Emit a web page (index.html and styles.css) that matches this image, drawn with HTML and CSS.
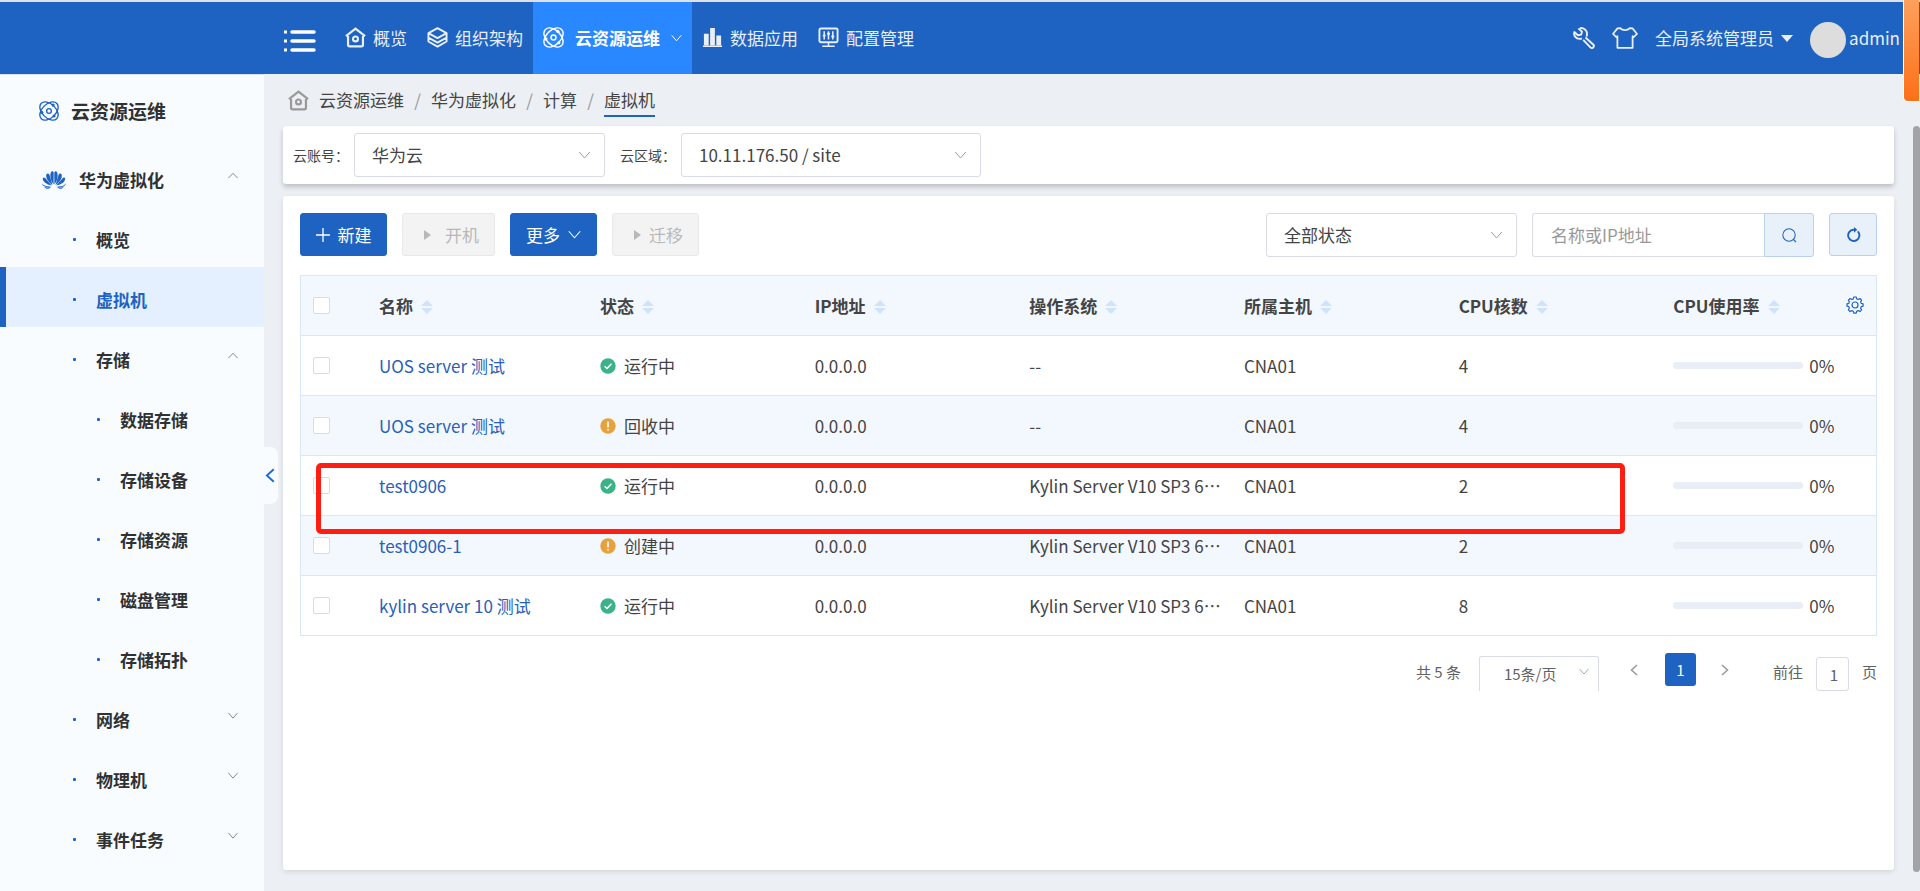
FILE: index.html
```html
<!DOCTYPE html>
<html lang="zh-CN">
<head>
    <meta charset="UTF-8">
    <meta name="viewport" content="width=device-width, initial-scale=1.0">
    <title>虚拟机 - 云资源运维</title>
    <link rel="stylesheet" href="styles.css">
</head>
<body>
    <!-- Icons -->
    <svg class="sprite" aria-hidden="true">
        <symbol id="i-home" viewBox="0 0 22 22">
            <path d="M1 9.5 11 1.8l10 7.7M3.2 9.5v9.2c0 1 .6 1.6 1.6 1.6h12.4c1 0 1.6-.6 1.6-1.6V9.5" fill="none" stroke="currentColor" stroke-width="2.3"/>
            <circle cx="11" cy="12.5" r="2.6" fill="none" stroke="currentColor" stroke-width="2.2"/>
        </symbol>
        <symbol id="i-layers" viewBox="0 0 22 22">
            <path d="M11 1.2 20.5 6.4 11 11.6 1.5 6.4zM1.5 6.4v4.8L11 16.4l9.5-5.2V6.4M1.5 11v4.2L11 20.6l9.5-5.4V11" fill="none" stroke="currentColor" stroke-width="2" stroke-linejoin="round"/>
        </symbol>
        <symbol id="i-atom" viewBox="0 0 22 22">
            <g fill="none" stroke="currentColor" stroke-width="1.5">
                <ellipse cx="11" cy="11" rx="12" ry="7.600" transform="rotate(45 11 11)"/>
                <ellipse cx="11" cy="11" rx="12" ry="7.600" transform="rotate(-45 11 11)"/>
                <circle cx="11" cy="11" r="2.600"/>
            </g>
            <circle cx="15.500" cy="4.500" r="1.700" fill="currentColor"/>
            <circle cx="3" cy="12.500" r="1.700" fill="currentColor"/>
            <circle cx="16.500" cy="16.500" r="1.700" fill="currentColor"/>
        </symbol>
        <symbol id="i-bars" viewBox="0 0 22 22">
            <path d="M2 7h5v12H2zM8.500 1h5v18h-5zM15 9h5v10h-5zM1 19.500h20V21H1z" fill="currentColor"/>
        </symbol>
        <symbol id="i-config" viewBox="0 0 22 22">
            <rect x="1.500" y="1.500" width="19" height="14.500" rx="1.500" fill="none" stroke="currentColor" stroke-width="2"/>
            <path d="M6.500 4.500V13M11 4.500V13M15.500 4.500V13M11 16v4M4.500 20.200h13" fill="none" stroke="currentColor" stroke-width="1.600"/>
            <path d="M5 9h3M9.500 7h3M14 10h3" fill="none" stroke="currentColor" stroke-width="2"/>
        </symbol>
        <symbol id="i-menu" viewBox="0 0 32 22">
            <path d="M8 2h22M8 11h22M8 20h22" stroke="currentColor" stroke-width="3.500" stroke-linecap="round"/>
            <path d="M0 .500h3v3H0zM0 9.500h3v3H0zM0 18.500h3v3H0z" fill="currentColor"/>
        </symbol>
        <symbol id="i-wrench" viewBox="0 0 22 22">
            <path d="M5.400 1.400 9 4.800 8.200 7.600 5 8.200 1.300 5C.4 8.500 2.800 12.400 7.400 11.800L9 11.600M7 1.100c3.600-.6 7.400 2 7 6.200l-.4 2.300M12.500 10.500l7.700 7a2 2 0 0 1-2.800 2.900l-7.200-7.600" fill="none" stroke="currentColor" stroke-width="1.900" stroke-linejoin="round"/>
        </symbol>
        <symbol id="i-shirt" viewBox="0 0 26 22">
            <path d="M8.200 1.200c2.200 2.600 7.400 2.600 9.600 0l2.700.2 4.400 5.400-3 3.200-1.300-.8v11.600H5.400V9.200l-1.300.8-3-3.200 4.400-5.400z" fill="none" stroke="currentColor" stroke-width="1.800" stroke-linejoin="round"/>
        </symbol>
        <symbol id="i-down" viewBox="0 0 12 8">
            <path d="M.700 1 6 7l5.300-6" fill="none" stroke="currentColor"/>
        </symbol>
        <symbol id="i-up" viewBox="0 0 12 8">
            <path d="M.700 7 6 1.500 11.300 7" fill="none" stroke="currentColor"/>
        </symbol>
        <symbol id="i-left" viewBox="0 0 8 12">
            <path d="M7 1 1.500 6 7 11" fill="none" stroke="currentColor" stroke-width="1.500"/>
        </symbol>
        <symbol id="i-right" viewBox="0 0 8 12">
            <path d="M1 1l5.500 5L1 11" fill="none" stroke="currentColor" stroke-width="1.500"/>
        </symbol>
        <symbol id="i-flower" viewBox="0 0 24 18">
            <g fill="currentColor">
                <path d="M11.600 13.500C8 9 7.500 3 9.500.500c1-.600 2 0 2.200 1.200z"/>
                <path d="M12.400 13.500C16 9 16.500 3 14.500.500c-1-.600-2 0-2.200 1.200z"/>
                <path d="M10.500 14C5.500 10.500 3.500 6 4.400 3.500c1-1.500 2.300-1.300 3 .2z"/>
                <path d="M13.500 14c5-3.500 7-8 6.100-10.500-1-1.500-2.300-1.300-3 .2z"/>
                <path d="M9.800 14.600C4 13.400.700 10.500.800 7.500c.6-1.300 1.500-1.400 2.400-.4z"/>
                <path d="M14.200 14.600c5.800-1.200 9.100-4.100 9-7.100-.6-1.300-1.500-1.400-2.400-.4z"/>
                <path d="M9.400 15.400C5 15.800 1.500 14.800.1 12.200c0 3.200 4.500 4.800 9.300 3.200zM9 16c-3 .5-5 .7-6.800 0 1.800 2.400 4.800 2.400 6.800 0z"/>
                <path d="M14.600 15.400c4.400.4 7.900-.6 9.300-3.200 0 3.200-4.500 4.800-9.300 3.200zM15 16c3 .5 5 .7 6.800 0-1.800 2.400-4.800 2.400-6.800 0z"/>
            </g>
        </symbol>
        <symbol id="i-search" viewBox="0 0 16 16">
            <circle cx="7.500" cy="7.500" r="6.600" fill="none" stroke="currentColor" stroke-width="1.100"/>
            <path d="m12 12 3 3" stroke="currentColor" stroke-width="1.200"/>
        </symbol>
        <symbol id="i-refresh" viewBox="0 0 16 16">
            <path d="M12.500 4.600a6 6 0 1 1-4.500-1.700h2" fill="none" stroke="currentColor" stroke-width="2"/>
            <path d="M8.500 0 12 2.900 8.500 6z" fill="currentColor"/>
        </symbol>
        <symbol id="i-plus" viewBox="0 0 14 14">
            <path d="M7 0v14M0 7h14" stroke="currentColor" stroke-width="1.300"/>
        </symbol>
        <symbol id="i-play" viewBox="0 0 7 10">
            <path d="M0 0l7 5-7 5z" fill="currentColor"/>
        </symbol>
        <symbol id="i-sort" viewBox="0 0 12 16">
            <path d="M6 1l6 6H0zM6 15l6-6H0z" fill="currentColor"/>
        </symbol>
        <symbol id="i-ok" viewBox="0 0 16 16">
            <circle cx="8" cy="8" r="7.700" fill="#3bb287"/>
            <path d="M4.600 8.200 7 10.500l4.500-4.700" fill="none" stroke="#fff" stroke-width="1.500"/>
        </symbol>
        <symbol id="i-warn" viewBox="0 0 16 16">
            <circle cx="8" cy="8" r="7.700" fill="#e6a23c"/>
            <path d="M8 3.500v6M8 11v1.600" stroke="#fff" stroke-width="1.600"/>
        </symbol>
        <symbol id="i-gear" viewBox="0 0 18 18">
            <path d="M7.800 1h2.400l.5 1.900 1.500.6L13.900 2.500l1.700 1.700-1 1.700.6 1.500 1.900.4v2.400l-1.900.5-.6 1.500 1 1.700-1.700 1.700-1.700-1-1.500.6-.5 1.900H7.800l-.5-1.900-1.500-.6-1.700 1-1.700-1.700 1-1.700-.6-1.500L1 10.200V7.800l1.800-.4.600-1.500-1-1.700 1.700-1.700 1.700 1 1.500-.6z" fill="none" stroke="currentColor" stroke-width="1.200" stroke-linejoin="round"/>
            <circle cx="9" cy="9" r="3" fill="none" stroke="currentColor" stroke-width="1.200"/>
        </symbol>
    </svg>

    <header class="header">
        <button class="menu-btn" aria-label="菜单"><svg><use href="#i-menu"/></svg></button>
        <nav class="navbar">
            <a href="#"><svg><use href="#i-home"/></svg>概览</a>
            <a href="#"><svg><use href="#i-layers"/></svg>组织架构</a>
            <a href="#" class="active"><svg><use href="#i-atom"/></svg>云资源运维<svg class="caret"><use href="#i-down"/></svg></a>
            <a href="#"><svg><use href="#i-bars"/></svg>数据应用</a>
            <a href="#"><svg><use href="#i-config"/></svg>配置管理</a>
        </nav>
        <div class="user">
            <button aria-label="工具"><svg class="tool"><use href="#i-wrench"/></svg></button>
            <button aria-label="主题"><svg class="theme"><use href="#i-shirt"/></svg></button>
            <button class="role">全局系统管理员<span class="triangle"></span></button>
            <a href="#" class="account"><span class="avatar"></span>admin</a>
        </div>
    </header>

    <div class="layout">
        <aside class="sidebar">
            <h2><svg><use href="#i-atom"/></svg>云资源运维</h2>
            <ul>
                <li><a href="#" class="group"><svg class="logo"><use href="#i-flower"/></svg>华为虚拟化<svg class="arrow"><use href="#i-up"/></svg></a></li>
                <li><a href="#" class="item">概览</a></li>
                <li><a href="#" class="item active">虚拟机</a></li>
                <li><a href="#" class="item">存储<svg class="arrow"><use href="#i-up"/></svg></a></li>
                <li><a href="#" class="item sub">数据存储</a></li>
                <li><a href="#" class="item sub">存储设备</a></li>
                <li><a href="#" class="item sub">存储资源</a></li>
                <li><a href="#" class="item sub">磁盘管理</a></li>
                <li><a href="#" class="item sub">存储拓扑</a></li>
                <li><a href="#" class="item">网络<svg class="arrow"><use href="#i-down"/></svg></a></li>
                <li><a href="#" class="item">物理机<svg class="arrow"><use href="#i-down"/></svg></a></li>
                <li><a href="#" class="item">事件任务<svg class="arrow"><use href="#i-down"/></svg></a></li>
            </ul>
            <button class="collapse" aria-label="收起"><svg><use href="#i-left"/></svg></button>
        </aside>

        <main class="main">
            <nav class="breadcrumb">
                <svg><use href="#i-home"/></svg>
                <a href="#">云资源运维</a><span>/</span>
                <a href="#">华为虚拟化</a><span>/</span>
                <a href="#">计算</a><span>/</span>
                <a href="#" class="current">虚拟机</a>
            </nav>

            <section class="filter">
                <label for="account">云账号：</label>
                <div class="select account-select">
                    <select id="account"><option>华为云</option></select>
                    <svg><use href="#i-down"/></svg>
                </div>
                <label for="region">云区域：</label>
                <div class="select region-select">
                    <select id="region"><option>10.11.176.50 / site</option></select>
                    <svg><use href="#i-down"/></svg>
                </div>
            </section>

            <section class="content">
                <div class="toolbar">
                    <button class="btn primary"><svg class="plus"><use href="#i-plus"/></svg>新建</button>
                    <button class="btn start" disabled><svg class="play"><use href="#i-play"/></svg>开机</button>
                    <button class="btn primary">更多<svg class="more"><use href="#i-down"/></svg></button>
                    <button class="btn" disabled><svg class="play"><use href="#i-play"/></svg>迁移</button>
                    <div class="select state-select">
                        <select aria-label="状态"><option>全部状态</option></select>
                        <svg><use href="#i-down"/></svg>
                    </div>
                    <div class="search">
                        <input type="text" placeholder="名称或IP地址" aria-label="名称或IP地址">
                        <button aria-label="搜索"><svg><use href="#i-search"/></svg></button>
                    </div>
                    <button class="refresh" aria-label="刷新"><svg><use href="#i-refresh"/></svg></button>
                </div>

                <div class="table-wrap">
                    <table>
                        <thead>
                            <tr>
                                <th class="col-check"><input type="checkbox" aria-label="全选"></th>
                                <th class="col-name">名称<svg class="sort"><use href="#i-sort"/></svg></th>
                                <th>状态<svg class="sort"><use href="#i-sort"/></svg></th>
                                <th>IP地址<svg class="sort"><use href="#i-sort"/></svg></th>
                                <th>操作系统<svg class="sort"><use href="#i-sort"/></svg></th>
                                <th>所属主机<svg class="sort"><use href="#i-sort"/></svg></th>
                                <th>CPU核数<svg class="sort"><use href="#i-sort"/></svg></th>
                                <th>CPU使用率<svg class="sort"><use href="#i-sort"/></svg></th>
                            </tr>
                        </thead>
                        <tbody>
                            <tr>
                                <td><input type="checkbox" aria-label="选择"></td>
                                <td><a href="#">UOS server 测试</a></td>
                                <td><svg class="state"><use href="#i-ok"/></svg>运行中</td>
                                <td>0.0.0.0</td>
                                <td>--</td>
                                <td>CNA01</td>
                                <td>4</td>
                                <td><div class="usage"><span class="bar"></span>0%</div></td>
                            </tr>
                            <tr>
                                <td><input type="checkbox" aria-label="选择"></td>
                                <td><a href="#">UOS server 测试</a></td>
                                <td><svg class="state"><use href="#i-warn"/></svg>回收中</td>
                                <td>0.0.0.0</td>
                                <td>--</td>
                                <td>CNA01</td>
                                <td>4</td>
                                <td><div class="usage"><span class="bar"></span>0%</div></td>
                            </tr>
                            <tr>
                                <td><input type="checkbox" aria-label="选择"></td>
                                <td><a href="#">test0906</a></td>
                                <td><svg class="state"><use href="#i-ok"/></svg>运行中</td>
                                <td>0.0.0.0</td>
                                <td>Kylin Server V10 SP3 6…</td>
                                <td>CNA01</td>
                                <td>2</td>
                                <td><div class="usage"><span class="bar"></span>0%</div></td>
                            </tr>
                            <tr>
                                <td><input type="checkbox" aria-label="选择"></td>
                                <td><a href="#">test0906-1</a></td>
                                <td><svg class="state"><use href="#i-warn"/></svg>创建中</td>
                                <td>0.0.0.0</td>
                                <td>Kylin Server V10 SP3 6…</td>
                                <td>CNA01</td>
                                <td>2</td>
                                <td><div class="usage"><span class="bar"></span>0%</div></td>
                            </tr>
                            <tr>
                                <td><input type="checkbox" aria-label="选择"></td>
                                <td><a href="#">kylin server 10 测试</a></td>
                                <td><svg class="state"><use href="#i-ok"/></svg>运行中</td>
                                <td>0.0.0.0</td>
                                <td>Kylin Server V10 SP3 6…</td>
                                <td>CNA01</td>
                                <td>8</td>
                                <td><div class="usage"><span class="bar"></span>0%</div></td>
                            </tr>
                        </tbody>
                    </table>
                    <button class="settings" aria-label="列设置"><svg><use href="#i-gear"/></svg></button>
                    <div class="highlight"></div>
                </div>

                <div class="pagination">
                    <span>共 5 条</span>
                    <div class="page-size">
                        <select aria-label="每页条数"><option>15条/页</option></select>
                        <svg><use href="#i-down"/></svg>
                    </div>
                    <button class="page-btn" aria-label="上一页"><svg><use href="#i-left"/></svg></button>
                    <button class="page-btn current">1</button>
                    <button class="page-btn" aria-label="下一页"><svg><use href="#i-right"/></svg></button>
                    <label for="jump">前往</label>
                    <input id="jump" type="text" value="1">
                    <span>页</span>
                </div>
            </section>
        </main>
    </div>

    <div class="side-tab"></div>
    <div class="scrollbar"></div>
</body>
</html>
```
FILE: styles.css
```css
* {
    margin: 0;
    padding: 0;
    box-sizing: border-box;
}

body {
    min-height: 100vh;
    display: flex;
    flex-direction: column;
    font-family: "Noto Sans CJK SC", sans-serif;
    font-size: 17px;
    line-height: 24px;
    color: #444;
    background: #eceff4;
}

a {
    color: inherit;
    text-decoration: none;
}

button, input, select {
    font: inherit;
    color: inherit;
    border: none;
    background: none;
}

svg {
    display: block;
    flex-shrink: 0;
}

.sprite {
    position: absolute;
    width: 0;
    height: 0;
}

/* Header */
.header {
    display: flex;
    height: 74px;
    padding-left: 284px;
    padding-right: 20px;
    border-top: 2px solid #dfe1e4;
    background: #1e63c1;
    color: #e9eef7;
}

.menu-btn {
    margin-right: 19px;
    color: #fff;
}

.menu-btn svg {
    width: 32px;
    height: 22px;
    margin-top: 6px;
}

.navbar {
    display: flex;
}

.navbar a {
    display: flex;
    align-items: center;
    gap: 7px;
    padding: 0 10px;
}

.navbar a svg {
    width: 21px;
    height: 21px;
    margin-bottom: 2px;
}

.navbar .active {
    gap: 11px;
    background: #2988ff;
    color: #fff;
    font-weight: bold;
}

.navbar .active .caret {
    width: 11px;
    height: 8px;
    margin-bottom: 0;
}

.user {
    display: flex;
    align-items: center;
    margin-left: auto;
    gap: 17px;
    white-space: nowrap;
}

.user .tool {
    width: 22px;
    height: 22px;
}

.user .theme {
    width: 26px;
    height: 22px;
}

.role {
    display: flex;
    align-items: center;
    gap: 7px;
}

.triangle {
    border: 6px solid transparent;
    border-top: 7px solid #e9eef7;
    border-bottom: none;
}

.account {
    display: flex;
    align-items: center;
    gap: 3px;
}

.avatar {
    width: 36px;
    height: 36px;
    margin-top: 4px;
    border-radius: 50%;
    background: #ddd;
}

/* Sidebar */
.layout {
    flex: 1;
    display: flex;
}

.sidebar {
    position: relative;
    flex-shrink: 0;
    width: 264px;
    border-top: 1px solid #dcdfe3;
    background: #f9fcff;
    color: #303133;
    font-weight: bold;
}

.sidebar ul {
    list-style: none;
}

.sidebar h2 {
    display: flex;
    align-items: center;
    gap: 12px;
    height: 72px;
    padding-left: 39px;
    font-size: 19px;
}

.sidebar h2 svg {
    width: 20px;
    height: 20px;
    color: #1e63c1;
}

.sidebar li a {
    display: flex;
    align-items: center;
    height: 60px;
    padding-top: 5px;
    padding-right: 25px;
}

.sidebar .group {
    gap: 13px;
    padding-left: 42px;
}

.sidebar .logo {
    width: 24px;
    height: 18px;
    color: #1e63c1;
}

.sidebar .arrow {
    width: 12px;
    height: 7px;
    margin-left: auto;
    margin-bottom: 8px;
    color: #777;
}

.sidebar .item {
    padding-left: 73px;
}

.sidebar .item.sub {
    padding-left: 97px;
}

.sidebar .item::before {
    content: "";
    width: 3px;
    height: 3px;
    margin-right: 20px;
    border-radius: 1px;
    background: #1e63c1;
}

.sidebar .item.active {
    padding-left: 67px;
    border-left: 6px solid #1e63c1;
    background: #e4f0ff;
    color: #1e63c1;
}

.collapse {
    position: absolute;
    top: 372px;
    left: 100%;
    width: 14px;
    height: 57px;
    padding-left: 1px;
    border-radius: 0 8px 8px 0;
    background: #f9fcff;
    color: #1668e3;
}

.collapse svg {
    width: 10px;
    height: 15px;
}

/* Main */
.main {
    flex: 1;
    min-width: 0;
    display: flex;
    flex-direction: column;
    padding: 0 26px 21px 19px;
}

.breadcrumb {
    display: flex;
    align-items: center;
    height: 52px;
    padding-left: 5px;
}

.breadcrumb svg {
    width: 21px;
    height: 21px;
    margin-right: 10px;
    color: #999;
}

.breadcrumb span {
    width: 27px;
    text-align: center;
    color: #999;
}

.breadcrumb a {
    border-bottom: 2px solid transparent;
    padding: 5px 0 3px;
}

.breadcrumb .current {
    border-color: #1e63c1;
}

.filter {
    display: flex;
    align-items: center;
    gap: 5px;
    height: 58px;
    margin-bottom: 12px;
    padding-left: 10px;
    border-radius: 3px;
    background: #fff;
    box-shadow: 0 3px 5px rgba(0, 0, 0, 0.2);
}

.filter label {
    font-size: 14px;
}

/* Drop-downs */
.select {
    position: relative;
    height: 44px;
}

.select select {
    width: 100%;
    height: 100%;
    padding: 0 17px;
    border: 1px solid #d9dce6;
    border-radius: 3px;
    appearance: none;
    background: #fff;
}

.select svg {
    position: absolute;
    top: 18px;
    right: 14px;
    width: 13px;
    height: 8px;
    color: #999;
    pointer-events: none;
}

.account-select {
    width: 251px;
    margin-right: 10px;
}

.region-select {
    width: 300px;
}

.state-select {
    width: 251px;
    margin-left: auto;
}

.content {
    flex: 1;
    padding: 17px;
    border-radius: 3px;
    background: #fff;
    box-shadow: 0 2px 5px rgba(0, 0, 0, 0.1);
}

/* Toolbar */
.toolbar {
    display: flex;
    gap: 15px;
    margin-bottom: 18px;
}

.btn {
    display: flex;
    align-items: center;
    justify-content: center;
    gap: 8px;
    width: 87px;
    height: 43px;
    border: 1px solid #e8e8e8;
    border-radius: 3px;
    background: #f3f3f3;
    color: #b8b8b8;
}

.btn.primary {
    border-color: #1e63c1;
    background: #1e63c1;
    color: #fff;
}

.btn:disabled {
    padding-left: 6px;
}

.btn.start {
    gap: 14px;
    width: 93px;
}

.plus {
    width: 14px;
    height: 14px;
}

.play {
    width: 7px;
    height: 10px;
}

.more {
    width: 13px;
    height: 9px;
}

.search {
    display: flex;
    width: 282px;
    height: 44px;
}

.search input {
    flex: 1;
    min-width: 0;
    padding: 0 18px;
    border: 1px solid #d9dce6;
    border-right: none;
    border-radius: 3px 0 0 3px;
}

.search input::placeholder {
    color: #999;
}

.search button, .refresh {
    display: flex;
    align-items: center;
    justify-content: center;
    width: 50px;
    height: 44px;
    border: 1px solid #bbd0ec;
    border-radius: 0 3px 3px 0;
    background: #e8f0fa;
    color: #1e63c1;
}

.refresh {
    width: 48px;
    height: 43px;
    border-radius: 3px;
}

.search svg, .refresh svg {
    width: 15px;
    height: 15px;
}

/* Table */
.table-wrap {
    position: relative;
    border: 1px solid #d9e7fb;
    border-bottom: none;
}

table {
    width: 100%;
    table-layout: fixed;
    border-collapse: separate;
    border-spacing: 0;
}

th, td {
    height: 60px;
    padding: 0 12px;
    border-bottom: 1px solid #d9e7fb;
    text-align: left;
    white-space: nowrap;
}

th {
    background: #f3f8ff;
}

tbody tr:nth-child(even) {
    background: #f3f8ff;
}

td a {
    color: #2a60b9;
}

.col-check {
    width: 66px;
}

.col-name {
    width: 221px;
}

table input {
    display: block;
    width: 17px;
    height: 17px;
    border: 1px solid #d9dce6;
    border-radius: 2px;
    appearance: none;
    background: #fff;
}

.sort {
    display: inline-block;
    width: 12px;
    height: 16px;
    margin-left: 8px;
    vertical-align: -2px;
    color: #cfe3fe;
}

.state {
    display: inline-block;
    width: 16px;
    height: 16px;
    margin-right: 8px;
    vertical-align: -1px;
}

.usage {
    display: flex;
    align-items: center;
    gap: 6px;
}

.bar {
    width: 130px;
    height: 7px;
    border-radius: 4px;
    background: #e9edf5;
}

.settings {
    position: absolute;
    top: 20px;
    right: 12px;
    color: #1e63c1;
}

.settings svg {
    width: 18px;
    height: 18px;
}

.highlight {
    position: absolute;
    top: 187px;
    left: 15px;
    right: 251px;
    height: 71px;
    border: 5px solid #ff1e12;
    border-radius: 5px;
    pointer-events: none;
}

/* Pagination */
.pagination {
    display: flex;
    align-items: center;
    justify-content: flex-end;
    margin-top: 17px;
    font-size: 15px;
    color: #606266;
}

.page-size {
    position: relative;
    align-self: flex-end;
    width: 120px;
    height: 35px;
    margin: 0 24px 0 18px;
}

.page-size select {
    width: 100%;
    height: 100%;
    padding: 0 24px;
    border: 1px solid #d9dce6;
    border-bottom: none;
    border-radius: 3px 3px 0 0;
    appearance: none;
}

.page-size svg {
    position: absolute;
    top: 12px;
    right: 10px;
    width: 10px;
    height: 7px;
    color: #999;
}

.page-btn {
    display: flex;
    align-items: center;
    justify-content: center;
    width: 23px;
    height: 33px;
    margin-bottom: 5px;
    color: #999;
}

.page-btn svg {
    width: 8px;
    height: 12px;
}

.page-btn.current {
    width: 31px;
    margin-left: 19px;
    margin-right: 18px;
    border-radius: 3px;
    background: #1e63c1;
    color: #fff;
}

.pagination label {
    margin-left: 36px;
}

.pagination input {
    width: 33px;
    height: 34px;
    margin: 4px 13px 0 13px;
    padding-left: 3px;
    border: 1px solid #d9dce6;
    border-radius: 3px;
    text-align: center;
}

/* Floating tab and scroll thumb on the right edge */
.side-tab {
    position: fixed;
    top: 0;
    right: 1px;
    width: 16px;
    height: 102px;
    border-left: 1px solid #fff;
    border-bottom: 1px solid #fff;
    border-radius: 0 0 0 5px;
    background: linear-gradient(#ffa05c, #fb7018);
}

.scrollbar {
    position: fixed;
    top: 126px;
    right: 0;
    bottom: 19px;
    width: 7px;
    border-radius: 4px;
    background: #a2a3a8;
}
```
